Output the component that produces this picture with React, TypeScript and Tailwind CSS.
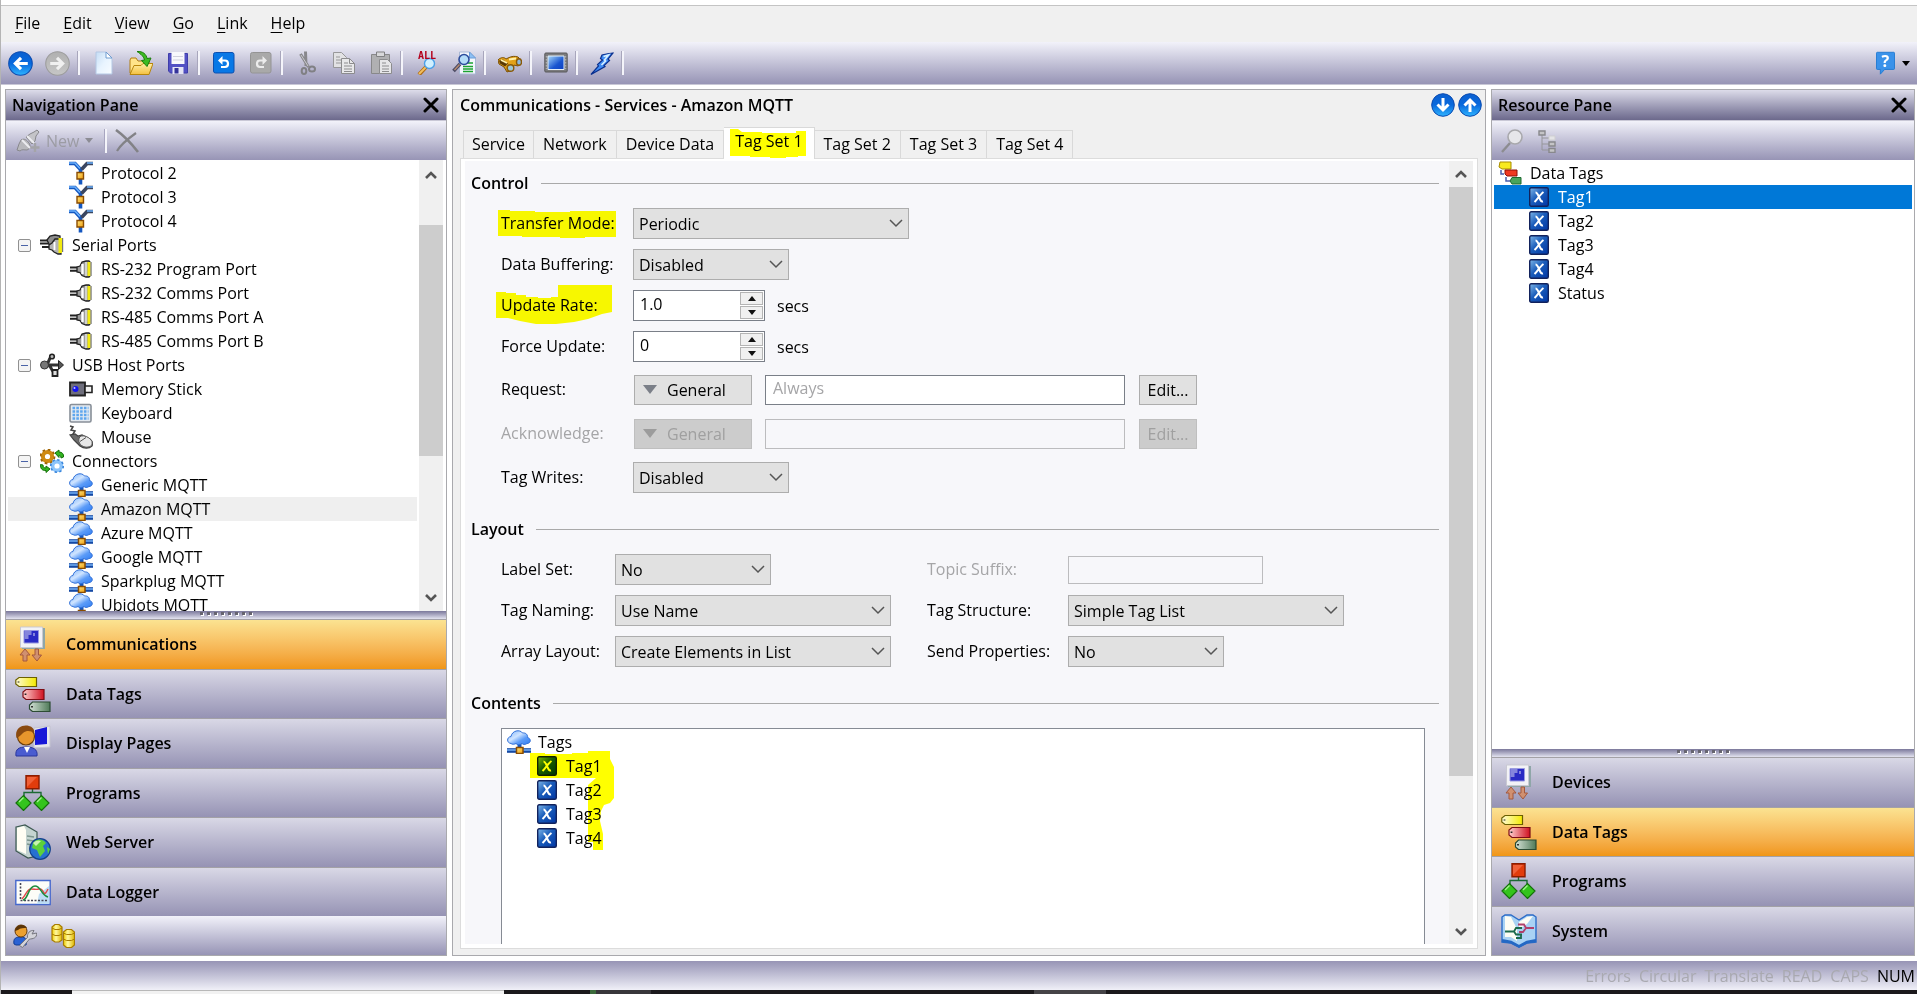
import React, { useId } from "react";

/* ---------- icons ---------- */

type IconProps = { className?: string };

const Svg = ({ box, className, children }: { box: string; className?: string; children: React.ReactNode }) => (
  <svg viewBox={box} className={className} aria-hidden="true" fill="none">
    {children}
  </svg>
);

const Defs = () => (
  <svg width="0" height="0" className="absolute" aria-hidden="true">
    <defs>
      <linearGradient id="gBall" x1="0" y1="0" x2="0" y2="1">
        <stop offset="0" stopColor="#0a5fd0" />
        <stop offset="0.5" stopColor="#0869dd" />
        <stop offset="1" stopColor="#2fb4ff" />
      </linearGradient>
      <linearGradient id="gGrey" x1="0" y1="0" x2="0" y2="1">
        <stop offset="0" stopColor="#b0b0b0" />
        <stop offset="1" stopColor="#c6c6c6" />
      </linearGradient>
      <linearGradient id="gX" x1="0" y1="0" x2="1" y2="1">
        <stop offset="0" stopColor="#7fb8ea" />
        <stop offset="0.45" stopColor="#1a5cba" />
        <stop offset="1" stopColor="#0036a4" />
      </linearGradient>
      <linearGradient id="gCloud" x1="0" y1="0" x2="1" y2="1">
        <stop offset="0" stopColor="#7db4fb" />
        <stop offset="0.4" stopColor="#cfe4ff" />
        <stop offset="0.65" stopColor="#5c9cf8" />
        <stop offset="1" stopColor="#2f7df4" />
      </linearGradient>
      <linearGradient id="gOrange" x1="0" y1="0" x2="1" y2="1">
        <stop offset="0" stopColor="#ffe27a" />
        <stop offset="1" stopColor="#f0a010" />
      </linearGradient>
      <linearGradient id="gFolder" x1="0" y1="0" x2="0" y2="1">
        <stop offset="0" stopColor="#fff0a8" />
        <stop offset="1" stopColor="#f4c040" />
      </linearGradient>
      <linearGradient id="gYel" x1="0" y1="0" x2="1" y2="0">
        <stop offset="0" stopColor="#fffbd8" />
        <stop offset="1" stopColor="#f4ea00" />
      </linearGradient>
      <linearGradient id="gRed" x1="0" y1="0" x2="1" y2="0">
        <stop offset="0" stopColor="#ffd0cf" />
        <stop offset="1" stopColor="#cf1020" />
      </linearGradient>
      <linearGradient id="gGrn" x1="0" y1="0" x2="1" y2="0">
        <stop offset="0" stopColor="#d4e2d6" />
        <stop offset="1" stopColor="#4f7a58" />
      </linearGradient>
      <linearGradient id="gPage" x1="0" y1="0" x2="1" y2="1">
        <stop offset="0" stopColor="#c4dcf4" />
        <stop offset="0.5" stopColor="#e8f4ff" />
        <stop offset="1" stopColor="#f8fcff" />
      </linearGradient>
      <linearGradient id="gScreen" x1="0" y1="0" x2="1" y2="1">
        <stop offset="0" stopColor="#a6d8fb" />
        <stop offset="0.6" stopColor="#1a56d0" />
        <stop offset="1" stopColor="#0d3fc0" />
      </linearGradient>
      <linearGradient id="gDb" x1="0" y1="0" x2="1" y2="0">
        <stop offset="0" stopColor="#f0d000" />
        <stop offset="0.4" stopColor="#fff8a0" />
        <stop offset="1" stopColor="#e0b800" />
      </linearGradient>
    </defs>
  </svg>
);

const Ball = ({ dir, off, className }: { dir: "left" | "right" | "up" | "down"; off?: boolean; className?: string }) => {
  const d = {
    left: "M19 12H7M12.500 6.500 7 12l5.500 5.500",
    right: "M5 12H17M11.500 6.500l5.500 5.500-5.500 5.500",
    up: "M12 19V7M6.500 12.500 12 7l5.500 5.500",
    down: "M12 5V17M6.500 11.500l5.500 5.500 5.500-5.500",
  }[dir];
  return (
    <Svg box="0 0 24 24" className={className}>
      <circle cx="12" cy="12" r="11.300" fill={off ? "url(#gGrey)" : "url(#gBall)"} stroke={off ? "#9c9c9c" : "#0a4ab0"} />
      <path d={d} stroke={off ? "#f0f0f0" : "#fff"} strokeWidth="3" />
    </Svg>
  );
};

const PageIcon = ({ className }: IconProps) => (
  <Svg box="0 0 24 24" className={className}>
    <path d="M4 1h10l6 6v16H4z" fill="url(#gPage)" stroke="#b4c8e4" />
    <path d="M14 1v6h6z" fill="#fff" stroke="#6f9cd0" />
  </Svg>
);
const OpenIcon = ({ className }: IconProps) => (
  <Svg box="0 0 24 24" className={className}>
    <path d="M1 9l1-2h5l2 3h11v12H1z" fill="#ffe48a" stroke="#b17d10" />
    <path d="M1 23.500 5 14.500h7l2-2h10l-4 11z" fill="url(#gFolder)" stroke="#b8860b" />
    <path d="M8 .5c6-.5 9.500 3 10 7l4-.5-4 8.500-5.500-6 3-.5C15 6 12 3 8 .5z" fill="#3dbb22" stroke="#1b7d0c" />
  </Svg>
);
const SaveIcon = ({ className }: IconProps) => (
  <Svg box="0 0 24 24" className={className}>
    <path d="M2.500 2.500h19V22h-17l-2-2z" fill="#5250c4" stroke="#3f3daa" />
    <path d="M5.500 1h13v12h-13z" fill="#f8f8fc" />
    <path d="M7 5.500h10M7 9h10" stroke="#d0d0dc" />
    <path d="M6.500 16h11v7h-11z" fill="#e4e4f4" />
    <path d="M8.500 17h4v5.500h-4z" fill="#35339a" />
  </Svg>
);
const TurnIcon = ({ off, className }: { off?: boolean; className?: string }) => (
  <Svg box="0 0 24 24" className={className}>
    <rect x="1.500" y="1.500" width="20.500" height="20.500" rx="2" fill={off ? "#a9a9a9" : "#0878e6"} stroke={off ? "#949494" : "#0c50b0"} />
    <g transform={off ? "translate(24 0) scale(-1 1)" : undefined}>
      <path d="M8 9.500h5c4 0 4 6.500 0 6.500H9" stroke={off ? "#ececec" : "#fff"} strokeWidth="2.200" />
      <path d="M10.500 5v9L6 9.500z" fill={off ? "#ececec" : "#fff"} />
    </g>
  </Svg>
);
const CutIcon = ({ className }: IconProps) => (
  <Svg box="0 0 24 24" className={className}>
    <path d="M5.500 3l8 13M10.500.5 11 15" stroke="#88888c" strokeWidth="3" />
    <path d="M6 4l7 11" stroke="#cacace" />
    <ellipse cx="9" cy="20" rx="2.300" ry="3" stroke="#808084" strokeWidth="2" />
    <ellipse cx="17" cy="18" rx="3" ry="2.500" stroke="#808084" strokeWidth="2" />
  </Svg>
);
const CopyIcon = ({ className }: IconProps) => (
  <Svg box="0 0 24 24" className={className}>
    <path d="M1.500 1.500h8l5 5v10h-13z" fill="#e2e2e4" stroke="#98989a" />
    <path d="M4 6h4M4 9h6M4 12h6" stroke="#98989a" />
    <path d="M9.500 7.500h8l5 5v10h-13z" fill="#e8e8ea" stroke="#8c8c8e" />
    <path d="M17.500 7.500v5h5" stroke="#8c8c8e" />
    <path d="M12 12h4M12 15h8M12 18h8M12 20.500h8" stroke="#8c8c8e" />
  </Svg>
);
const PasteIcon = ({ className }: IconProps) => (
  <Svg box="0 0 24 24" className={className}>
    <path d="M2.500 3.500h18v19h-18z" fill="#b0b0b2" stroke="#88888a" />
    <path d="M7.500 1h8v4.500h-8z" fill="#d8d8da" stroke="#808082" />
    <path d="M10.500 8.500h8l4 4v10h-12z" fill="#e6e6e8" stroke="#8c8c8e" />
    <path d="M13 12h4M13 15h7M13 18h7M13 20.500h7" stroke="#8c8c8e" />
  </Svg>
);
const FindAllIcon = ({ className }: IconProps) => (
  <Svg box="0 0 24 24" className={className}>
    <path d="M11 16l-7 7.500" stroke="#b06a10" strokeWidth="4" />
    <path d="M11 16l-7 7" stroke="#f0c060" strokeWidth="2" />
    <circle cx="14.500" cy="12.500" r="5" fill="#d0f0ff" stroke="#4aa0e8" strokeWidth="1.400" />
    <text x="12" y="8" textAnchor="middle" fill="#b4001c" className="font-['DejaVu_Sans_Mono',monospace] text-[10px] font-bold">
      ALL
    </text>
  </Svg>
);
const FindDocIcon = ({ className }: IconProps) => (
  <Svg box="0 0 24 24" className={className}>
    <path d="M7.500 1h10l6 6v16h-16z" fill="#f3f6fc" stroke="#a9b8d4" />
    <path d="M17.500 1v6h6z" fill="#8cc0f4" stroke="#6a9cd8" />
    <path d="M15 12h6M11 15.500h10M11 18h10M11 20.500h10" stroke="#1ca430" strokeWidth="1.700" />
    <path d="M8 13l-6.500 7" stroke="#4a4a64" strokeWidth="3.600" />
    <path d="M7.500 13.500l-5 5.500" stroke="#b88c70" strokeWidth="1.400" />
    <circle cx="12" cy="8.500" r="5" fill="#b4dcf8" stroke="#2c4c9c" strokeWidth="1.600" />
  </Svg>
);
const BinocularsIcon = ({ className }: IconProps) => (
  <Svg box="0 0 24 24" className={className}>
    <path d="M0 9c3-3 6-3 8-1l2-1c4-2 7-2 10-1l3 3v4l-3 2-4-1-2 5-5 2-3-5-5-3-1-4z" fill="#e2a21a" stroke="#7a5008" />
    <path d="M1 9.500l4-1 5 4-3 3-5-3z" fill="#5a3a04" />
    <path d="M3 9l6 3M11 8.500l7-1" stroke="#fff0a8" strokeWidth="1.800" />
    <circle cx="12.500" cy="17" r="3.300" fill="#9cc8d8" stroke="#8a5a08" strokeWidth="1.400" />
    <ellipse cx="21" cy="11" rx="2.500" ry="3.200" fill="#8cb8dc" stroke="#8a5a08" strokeWidth="1.400" />
  </Svg>
);
const ScreenIcon = ({ className }: IconProps) => (
  <Svg box="0 0 24 24" className={className}>
    <rect x=".8" y="2" width="22.400" height="19" rx="1" fill="#7c7c7e" stroke="#58585a" />
    <path d="M4 5h16v13.500H4z" fill="url(#gScreen)" stroke="#e4f0fa" />
    <path d="M2.300 5v13M21.700 5v13" stroke="#b8b8b8" strokeDasharray="1.500 1.500" />
  </Svg>
);
const BoltIcon = ({ className }: IconProps) => (
  <Svg box="0 0 24 24" className={className}>
    <path d="M12 4c4-1 7-2 11-2l-5 6 1.500 1.500-5.500 5 1 1L1 23.500l7.500-8.500-1-1.500 5-4.500-2-1.500z" fill="#3f8cf4" stroke="#0a2f8e" strokeWidth="1.200" />
    <path d="M13.500 5.500l5-1.500-4 5 1 1-4 4" stroke="#d8f0ff" strokeWidth="1.600" />
  </Svg>
);
const HelpIcon = ({ className }: IconProps) => (
  <Svg box="0 0 24 28" className={className}>
    <path d="M2.500 1.500h19a1 1 0 0 1 1 1v18a1 1 0 0 1-1 1H11L6 27v-5.500H2.500a1 1 0 0 1-1-1v-18a1 1 0 0 1 1-1z" fill="#3a92ea" stroke="#1b76d0" />
    <text x="12" y="18.500" textAnchor="middle" fill="#fff" className="font-['Open_Sans',sans-serif] text-[19px] font-bold">
      ?
    </text>
  </Svg>
);
const PlugIcon = ({ className }: IconProps) => (
  <Svg box="0 0 24 24" className={className}>
    <path d="M1 21l2-6 2-4c3-2 6 0 8 3 2 3 1 6-2 7-3 0-5-1-7 1z" fill="#b8b8bc" stroke="#88888c" />
    <path d="M10 8l4-3 4-2 3-2 2 2-3 4-1 5-3 3z" fill="#c4c4c8" stroke="#88888c" />
    <path d="M6 11l8 8M11 7l7 7" stroke="#ececf0" strokeWidth="1.800" />
    <path d="M19 14v9M14.500 18.500h9" stroke="#a4a4a8" strokeWidth="2.400" />
  </Svg>
);
const CloseIcon = ({ className }: IconProps) => (
  <Svg box="0 0 16 16" className={className}>
    <path d="M2 2l12 12M14 2 2 14" stroke="#000" strokeWidth="3" strokeLinecap="round" />
  </Svg>
);
const ThinX = ({ className }: IconProps) => (
  <Svg box="0 0 24 24" className={className}>
    <path d="M1 1c7 5 15 13 22 22" stroke="#828286" strokeWidth="2.600" />
    <path d="M21 4C14 9 6 15 2 22" stroke="#828286" strokeWidth="2.200" />
  </Svg>
);
const GlassIcon = ({ className }: IconProps) => (
  <Svg box="0 0 24 24" className={className}>
    <path d="M10 14l-8 9" stroke="#8c8c90" strokeWidth="2.400" />
    <circle cx="15" cy="8" r="7" fill="#e6e6ea" stroke="#a8a8ac" strokeWidth="1.600" />
  </Svg>
);
const HierarchyIcon = ({ className }: IconProps) => (
  <Svg box="0 0 24 24" className={className}>
    <path d="M7 6v15h8M7 9h8M7 15h8" stroke="#96969a" />
    <path d="M4 2h6v4H4zM14 13h6v4h-6zM14 19.500h6v4h-6z" fill="#c4c4c6" stroke="#88888c" strokeWidth="1.400" />
    <path d="M14 7h6v4h-6z" fill="#e4e4e6" stroke="#cfcfd1" />
  </Svg>
);

const ProtocolIcon = ({ className }: IconProps) => (
  <Svg box="0 0 24 24" className={className}>
    <path d="M0 2.500h6l5.500 6v15" stroke="#1457c0" strokeWidth="3.600" />
    <path d="M24 2.500h-6l-5.500 6" stroke="#3a4660" strokeWidth="3.600" />
    <path d="M0 2h6l5 5.500M24 2h-6" stroke="#6ab0fc" strokeWidth="1.600" />
    <path d="M8 11.500h6.500v6.500H8z" fill="url(#gOrange)" stroke="#8a4c00" strokeWidth="1.400" />
  </Svg>
);
const PortIcon = ({ className }: IconProps) => (
  <Svg box="0 0 24 24" className={className}>
    <path d="M1 10.500h8M1 13.800h8" stroke="#222" strokeWidth="2" />
    <path d="M8 10l3-1 2-4 4-1h3l1 1v14l-1 1h-3l-4-1.500-2-3L8 15z" fill="#9c9c9c" stroke="#222" strokeWidth="1.300" />
    <path d="M13.500 7v10" stroke="#fff" strokeWidth="2.400" />
    <path d="M17 5v14" stroke="#e4e4e4" strokeWidth="1.500" />
    <path d="M18.500 5h3v14h-3z" fill="#f2ea10" />
    <path d="M22.300 5v14" stroke="#a4a4a4" strokeWidth="1.400" />
  </Svg>
);
const PortsIcon = ({ className }: IconProps) => (
  <Svg box="0 0 24 24" className={className}>
    <path d="M0 7.500h8M0 10.500h9M2 14h9" stroke="#222" strokeWidth="2" />
    <path d="M7 7l3-4 5-1 5 1v9l-9 3z" fill="#8c8c8c" stroke="#222" strokeWidth="1.300" />
    <path d="M9 12l3-2 3-4h4l2 1v14h-3l-4-2-2-2-3-1z" fill="#b4b4b4" stroke="#222" strokeWidth="1.300" />
    <path d="M14.500 9v8" stroke="#fff" strokeWidth="1.800" />
    <path d="M18.500 5H22v15h-3.500z" fill="#f2ea10" />
    <path d="M22.600 5v14" stroke="#777" strokeWidth="1.200" />
  </Svg>
);
const UsbIcon = ({ className }: IconProps) => (
  <Svg box="0 0 24 24" className={className}>
    <path d="M3 12h17M5 12c5-1 3-8 7-8M8 12c4 1 3 7 7 8" stroke="#333" strokeWidth="3" />
    <path d="M18.500 7.500l5 4.500-5 4.500z" fill="#555" stroke="#222" />
    <circle cx="4.500" cy="12" r="4" fill="#777" stroke="#333" />
    <circle cx="12" cy="3.500" r="2.300" fill="#bbb" stroke="#222" strokeWidth="1.600" />
    <path d="M12.500 17h5v6h-5z" fill="#ddd" stroke="#222" strokeWidth="1.800" />
  </Svg>
);
const StickIcon = ({ className }: IconProps) => (
  <Svg box="0 0 24 24" className={className}>
    <path d="M1 5.500h15v13H1z" fill="#6e6e7c" stroke="#222" strokeWidth="1.800" />
    <path d="M16 9h7v6.500h-7z" fill="#f4f4f4" stroke="#222" strokeWidth="1.600" />
    <circle cx="6.500" cy="12" r="3" fill="#1414f0" />
    <circle cx="5.500" cy="11" r="1" fill="#c8c8ff" />
  </Svg>
);
const KeyboardIcon = ({ className }: IconProps) => (
  <Svg box="0 0 24 24" className={className}>
    <rect x="1" y="3.500" width="21" height="17.500" rx="1.500" fill="#e4eaf0" stroke="#888f98" strokeWidth="1.600" />
    <path d="M3.500 7h16M3.500 10.500h16M3.500 14h16M3.500 17.500h16" stroke="#5ea6ee" strokeWidth="2.400" strokeDasharray="2.600 1.200" />
  </Svg>
);
const MouseIcon = ({ className }: IconProps) => (
  <Svg box="0 0 24 24" className={className}>
    <path d="M1 1l3 1-2 3 4 1-2 3 3 2" stroke="#444" strokeWidth="1.500" />
    <path d="M1 10l4 5 6 6c4 3 9 3 12 0 1-2 0-5-2-7l-8-4-4 1-3-2z" fill="#6c6c6c" stroke="#444" strokeWidth="1.200" />
    <path d="M11 11.500c4-2 10 1 12 5 1 5-3 6-7 5.500-5-1-8-6-5-10.500z" fill="#e8e8e8" stroke="#555" />
    <path d="M17 12.500l-6 4" stroke="#555" />
  </Svg>
);
const GearsIcon = ({ className }: IconProps) => (
  <Svg box="0 0 24 24" className={className}>
    <circle cx="7.500" cy="7.500" r="4.600" stroke="#cf8a10" strokeWidth="4" />
    <circle cx="7.500" cy="7.500" r="7" stroke="#a06404" strokeWidth="1.800" strokeDasharray="2.700 2.800" />
    <circle cx="17" cy="17" r="4.400" stroke="#8cc4fa" strokeWidth="3.600" />
    <circle cx="17" cy="17" r="6.300" stroke="#3a86dc" strokeWidth="1.600" strokeDasharray="2.400 2.450" />
    <path d="M15 4l4-3v2c3 0 5 2 4.500 5l-2.500 1c0-2-1-2.500-2-2.500V8.500zM10 20l-4-3v2c-2 0-3-1-3-3l-2.500-.5c0 4 1 6 5.500 6v2z" fill="#32b420" stroke="#14700a" />
  </Svg>
);
const CloudIcon = ({ className }: IconProps) => (
  <Svg box="0 0 24 24" className={className}>
    <path d="M12.500 13v8" stroke="#1457c0" strokeWidth="4" />
    <path d="M0 20.500h24" stroke="#1549a4" strokeWidth="4.600" />
    <path d="M0 20h24" stroke="#7cb8fc" strokeWidth="1.400" />
    <path d="M9.500 17.500h6.500v6H9.500z" fill="url(#gOrange)" stroke="#8a4c00" strokeWidth="1.500" />
    <path d="M4 13.500c-4.500-.5-4.500-6.500 0-7C5 .5 13-1 15.500 3c3.500-.5 5.500 2 5 4.500 4 1 3.500 6-.5 6-2 1.500-4 1-5 0-2 1.500-5 1.500-6 0-1.500 1-4 1-5 0z" fill="url(#gCloud)" stroke="#2f6fd8" />
  </Svg>
);
const TagX = ({ className }: IconProps) => (
  <Svg box="0 0 20 20" className={className}>
    <rect x=".7" y=".7" width="18.600" height="18.600" rx="1.500" fill="url(#gX)" stroke="#12225c" strokeWidth="1.400" />
    <path d="M6.500 5.500c1.500 0 2 1 3.500 4.500s2 5 4 4.500M14.500 5c-3 2-6 7-9 10" stroke="#fff" strokeWidth="2" />
  </Svg>
);
const SmallTagsIcon = ({ className }: IconProps) => (
  <Svg box="0 0 24 24" className={className}>
    <path d="M2 1h11v7H4L1 6z" fill="#f8ea20" stroke="#a88c00" />
    <path d="M7 9h12v6H9l-2-2z" fill="#f03820" stroke="#8c1008" />
    <path d="M14 16.500h9v6.500h-9l-2-3z" fill="#4aa45c" stroke="#1c6a30" />
    <path d="M3 9v4h3M8 16v4h4" stroke="#4a5fae" strokeWidth="1.500" />
  </Svg>
);

const CommIcon = ({ className }: IconProps) => (
  <Svg box="0 0 36 36" className={className}>
    <path d="M7 2h23v21H7z" fill="#8fa6a8" />
    <path d="M5.500 1h22v20.500h-22z" fill="#f2f2f6" stroke="#c9c9d2" />
    <path d="M9 4.500h14.500v12.500H9z" fill="#2a2ac4" stroke="#9a9ae0" />
    <path d="M9.500 5h7v4h-3v4h-4zM18 7h2v3h-2z" fill="#8484dc" />
    <path d="M5 29 10 23l5 6h-3v6H8v-6zM17 29h3v-6h3.500v6h3L22 35z" fill="#d09070" stroke="#a4583c" />
  </Svg>
);
const TagsIcon = ({ className }: IconProps) => (
  <Svg box="0 0 36 36" className={className}>
    <path d="M4 1.500h17.500v9H4L.8 8V4z" fill="url(#gYel)" stroke="#6b6000" strokeWidth="1.200" />
    <path d="M11 13.500h18v10H11L8 21v-5z" fill="url(#gRed)" stroke="#7c0c14" strokeWidth="1.200" />
    <path d="M17.500 26H35v9.500H17.500L14.500 33v-4z" fill="url(#gGrn)" stroke="#2c4c34" strokeWidth="1.200" />
    <path d="M3.500 5.500v1M10.500 17.500v1.500M17 30v1.500" stroke="#222" strokeWidth="1.800" />
  </Svg>
);
const DisplayIcon = ({ className }: IconProps) => (
  <Svg box="0 0 36 36" className={className}>
    <path d="M19 3l16-2v21l-16 1z" fill="#e6e6ec" stroke="#c4c4d0" />
    <path d="M20 5l12-3v17l-12 1z" fill="#1616d8" />
    <path d="M1 31c-1-7 3-9 10-9s12 2 11 9H1z" fill="#4a5cd0" stroke="#28349c" />
    <path d="M9 22l3 6 3-6z" fill="#fff" />
    <circle cx="11" cy="11.500" r="8.500" fill="#e8962c" stroke="#6a3c08" strokeWidth="1.200" />
    <path d="M1.500 13C-1 3 8-1 14 1c4 1 6 4 5 7-3-2-7-3-11 0-2 2-4 4-6.500 5z" fill="#8a4a10" />
  </Svg>
);
const ProgramsIcon = ({ className }: IconProps) => (
  <Svg box="0 0 36 36" className={className}>
    <path d="M17.500 13v4M9 22v-4.500h17V22" stroke="#1c6a34" strokeWidth="1.400" />
    <path d="M11 .8h13v13H11z" fill="#e23c0c" stroke="#8c1c00" strokeWidth="1.400" />
    <path d="M12 12V2h10z" fill="#f06038" />
    <path d="M1 28l7.500-7.500L16 28l-7.500 7.500zM19 28l7.500-7.500L34 28l-7.500 7.500z" fill="#34c41c" stroke="#14700a" strokeWidth="1.200" />
    <path d="M4 27l4.500-4.500M22 27l4.500-4.500" stroke="#a4f090" strokeWidth="1.400" />
  </Svg>
);
const ServerIcon = ({ className }: IconProps) => (
  <Svg box="0 0 36 36" className={className}>
    <path d="M1 3l9-2 12 7v24l-9 2L1 27z" fill="#c4d4d0" stroke="#3c5850" strokeWidth="1.200" />
    <path d="M2 4l7-2 2 4v24l-9-4z" fill="#fffef4" />
    <path d="M12 12l7 1M12 16l7 1M12 20l5 1" stroke="#7c968e" strokeWidth="1.500" />
    <circle cx="25" cy="25" r="10.300" fill="#2670d0" stroke="#12408c" strokeWidth="1.200" />
    <path d="M18 19c4-5 10-4 13 0l-3 3 2 5-5 6-3-7-5-2zM32 23l3 2-2 5z" fill="#5cd03c" />
    <path d="M18 19c3-3 6-3 8-2l-5 5z" fill="#c8f4b0" />
  </Svg>
);
const LoggerIcon = ({ className }: IconProps) => (
  <Svg box="0 0 36 36" className={className}>
    <path d="M.8 6.500h34.400v24H.8z" fill="#fdfdf8" stroke="#4668cc" strokeWidth="1.400" />
    <path d="M24 20l10-8v18H22z" fill="#bcdcf4" />
    <path d="M5.500 9v17.500h28" stroke="#445" strokeDasharray="2 1.500" strokeWidth="1.600" />
    <path d="M7 25c4-4 5-10 9-10s5 1 8 0 4 2 5 4 3-2 4-4" stroke="#e04848" strokeWidth="1.400" />
    <path d="M8 26c5 0 5-14 12-14 6 0 6 9 13 11" stroke="#1c8c3c" strokeWidth="1.600" />
  </Svg>
);
const SystemIcon = ({ className }: IconProps) => (
  <Svg box="0 0 36 36" className={className}>
    <path d="M1 4l3-2 6 0 8 5 8-5 6 0 3 2v25l-9 1-8 4-8-4-9-1z" fill="#a9d2f4" stroke="#2c6cc8" strokeWidth="1.400" />
    <path d="M4 3l6 1 6 12v12l-6-4H4z" fill="#fdfcf4" />
    <path d="M32 3l-6 1-8 5v7l8-5z" fill="#fdfcf4" />
    <path d="M4 18.500h10M21 15h-6l-2 3.500 2 3h6M20 21.500v3.500h-5" stroke="#1c6a4c" strokeWidth="1.800" />
    <path d="M33 15h-8l-2-3.500h-6M25 15l-3 4h-4" stroke="#b0406c" strokeWidth="1.800" />
    <path d="M1 27.500l9 1.500 8 4.500 8-4.500 9-1.500" stroke="#2468c4" strokeWidth="2.800" />
  </Svg>
);
const UserToolIcon = ({ className }: IconProps) => (
  <Svg box="0 0 24 24" className={className}>
    <path d="M1 20c-1-6 2-7 7-7s6 3 5 8H3z" fill="#2a62d4" stroke="#123c94" />
    <circle cx="8" cy="7" r="6" fill="#eca030" stroke="#6a3c08" />
    <path d="M2 7C2 0 12-1 14 4c-3 0-7 0-9 2z" fill="#5a3408" />
    <path d="M23.500 9c1 5-4 6-7 6l-7 8.500-3-2 8-8C14 9 17 6 21 6.500L19 10z" fill="#d4d4da" stroke="#77777f" />
  </Svg>
);
const DbIcon = ({ className }: IconProps) => (
  <Svg box="0 0 24 24" className={className}>
    <path d="M1 3l3-2.500h4L11 3v13l-3 2H4l-3-2z" fill="url(#gDb)" stroke="#a87c00" strokeWidth="1.200" />
    <path d="M1 10l3 1.500h4L11 10M1 4l3 1.500h4L11 4" stroke="#a87c00" />
    <path d="M12.500 8l3-2.500h5l3 2.500v13l-3 2.500h-5l-3-2.500z" fill="url(#gDb)" stroke="#a87c00" strokeWidth="1.200" />
    <path d="M12.500 15l3 1.500h5l3-1.500M12.500 9l3 1.500h5l3-1.500" stroke="#a87c00" />
  </Svg>
);

/* ---------- shared pieces ---------- */

const barGradient = "bg-linear-to-b from-[#f2f2fa] to-[#9794b5]";

const Separator = () => <span className="ml-[2px] mr-[5px] h-6 w-[2px] bg-[#f4f4fa] shadow-[-1px_0_0_#a8a6bc]" />;

const ToolButton = ({ label, disabled, children }: { label: string; disabled?: boolean; children: React.ReactNode }) => (
  <button type="button" aria-label={label} disabled={disabled} className="flex h-9 w-[37px] items-center justify-center">
    {children}
  </button>
);

const PaneHeader = ({ title }: { title: string }) => (
  <header className="flex h-[30px] items-center justify-between bg-linear-to-b from-[#dddcea] to-[#6c698c] pl-[6px] pr-[7px]">
    <h2 className="font-semibold">{title}</h2>
    <button type="button" aria-label={`Close ${title}`}>
      <CloseIcon className="size-4" />
    </button>
  </header>
);

const Chevron = ({ up, className = "" }: { up?: boolean; className?: string }) => (
  <svg viewBox="0 0 12 10" className={`h-2.5 w-3 ${className}`} fill="none" aria-hidden="true">
    <path d={up ? "M1 8 6 3l5 5" : "M1 2l5 5 5-5"} stroke="#555" strokeWidth="2.600" />
  </svg>
);

const Splitter = () => (
  <div className="flex h-2 shrink-0 justify-center gap-[4px] bg-linear-to-b from-[#7b789b] to-[#e4e4f0] pt-px">
    {Array.from({ length: 8 }, (_, i) => (
      <span key={i} className="size-[3px] bg-[#66646f] shadow-[1px_1px_0_#fff]" />
    ))}
  </div>
);

type NavItem = { label: string; icon: React.FC<IconProps>; active?: boolean };

const NavList = ({ items, className }: { items: NavItem[]; className: string }) => (
  <nav className={`grid shrink-0 auto-rows-fr ${className}`}>
    {items.map(({ label, icon: Icon, active }) => (
      <button
        key={label}
        type="button"
        aria-current={active ? "page" : undefined}
        className={`flex items-center gap-[15px] border-t border-[#a3a1a6] bg-linear-to-b pl-[9px] text-left font-semibold ${
          active ? "from-[#fbe391] to-[#f09614]" : "from-[#d9d8e6] to-[#9693b4]"
        }`}
      >
        <Icon className="size-9" />
        {label}
      </button>
    ))}
  </nav>
);

/* ---------- navigation tree ---------- */

type Leaf = { label: string; icon: React.FC<IconProps>; selected?: boolean };
type Branch = { label?: string; icon?: React.FC<IconProps>; items: Leaf[] };

const navTree: Branch[] = [
  {
    items: [
      { label: "Protocol 2", icon: ProtocolIcon },
      { label: "Protocol 3", icon: ProtocolIcon },
      { label: "Protocol 4", icon: ProtocolIcon },
    ],
  },
  {
    label: "Serial Ports",
    icon: PortsIcon,
    items: [
      { label: "RS-232 Program Port", icon: PortIcon },
      { label: "RS-232 Comms Port", icon: PortIcon },
      { label: "RS-485 Comms Port A", icon: PortIcon },
      { label: "RS-485 Comms Port B", icon: PortIcon },
    ],
  },
  {
    label: "USB Host Ports",
    icon: UsbIcon,
    items: [
      { label: "Memory Stick", icon: StickIcon },
      { label: "Keyboard", icon: KeyboardIcon },
      { label: "Mouse", icon: MouseIcon },
    ],
  },
  {
    label: "Connectors",
    icon: GearsIcon,
    items: [
      { label: "Generic MQTT", icon: CloudIcon },
      { label: "Amazon MQTT", icon: CloudIcon, selected: true },
      { label: "Azure MQTT", icon: CloudIcon },
      { label: "Google MQTT", icon: CloudIcon },
      { label: "Sparkplug MQTT", icon: CloudIcon },
      { label: "Ubidots MQTT", icon: CloudIcon },
    ],
  },
];

const NavigationPane = () => (
  <section className="flex w-[442px] shrink-0 flex-col border border-[#a9a9ad] bg-white">
    <PaneHeader title="Navigation Pane" />
    <div className={`flex h-10 shrink-0 items-center border-t border-[#c9c8d6] pl-[10px] text-[#9c9ca4] ${barGradient}`}>
      <button type="button" disabled className="flex items-center gap-1.5">
        <PlugIcon className="size-6" />
        New
        <svg viewBox="0 0 8 5" className="w-2" aria-hidden="true">
          <path d="M0 0h8L4 5z" fill="#8c8c94" />
        </svg>
      </button>
      <span className="ml-3 mr-2 h-6 w-[2px] bg-[#f4f4fa] shadow-[-1px_0_0_#a8a6c0]" />
      <button type="button" aria-label="Delete" disabled>
        <ThinX className="size-6" />
      </button>
    </div>
    <div className="flex min-h-0 flex-1 pr-[3px]">
      <ul role="tree" className="min-w-0 flex-1 overflow-hidden pl-[2px] pr-[2px] pt-px">
        {navTree.map((branch, i) => (
          <li key={branch.label ?? i} role="none">
            {branch.icon && (
              <div role="treeitem" aria-expanded="true" className="flex h-6 items-center pl-[10px]">
                <span className="mr-[9px] flex size-[13px] items-center justify-center rounded-[2px] border border-[#919191] bg-[#f4f4f4]">
                  <span className="h-px w-[7px] bg-[#4a63a7]" />
                </span>
                <branch.icon className="mr-2 size-6" />
                {branch.label}
              </div>
            )}
            <ul role="group">
              {branch.items.map(({ label, icon: Icon, selected }) => (
                <li
                  key={label}
                  role="treeitem"
                  aria-selected={!!selected}
                  className={`flex h-6 items-center gap-2 pl-[61px] ${selected ? "bg-[#efefef]" : ""}`}
                >
                  <Icon className="size-6 shrink-0" />
                  {label}
                </li>
              ))}
            </ul>
          </li>
        ))}
      </ul>
      <div className="flex w-6 flex-col items-center bg-[#f0f0f0] pb-2 pt-2.5">
        <Chevron up />
        <div className="mt-[45px] h-[231px] w-full bg-[#cdcdcd]" />
        <Chevron className="mt-auto" />
      </div>
    </div>
    <Splitter />
    <NavList
      className="h-[297px]"
      items={[
        { label: "Communications", icon: CommIcon, active: true },
        { label: "Data Tags", icon: TagsIcon },
        { label: "Display Pages", icon: DisplayIcon },
        { label: "Programs", icon: ProgramsIcon },
        { label: "Web Server", icon: ServerIcon },
        { label: "Data Logger", icon: LoggerIcon },
      ]}
    />
    <div className={`flex h-[39px] shrink-0 items-center gap-[14px] pl-[7px] ${barGradient}`}>
      <button type="button" aria-label="Security">
        <UserToolIcon className="size-6" />
      </button>
      <button type="button" aria-label="Data">
        <DbIcon className="size-6" />
      </button>
    </div>
  </section>
);

/* ---------- form controls ---------- */

const Heading = ({ children }: { children: string }) => (
  <div className="flex h-6 items-center gap-3">
    <h3 className="font-semibold">{children}</h3>
    <span className="h-px flex-1 bg-[#a9a9a9]" />
  </div>
);

const Row = ({
  label,
  labelWidth,
  disabled,
  mark,
  children,
}: {
  label: string;
  labelWidth: string;
  disabled?: boolean;
  mark?: React.ReactNode;
  children: (id: string) => React.ReactNode;
}) => {
  const id = useId();
  return (
    <div className="flex h-[31px] items-center">
      <div className={`relative shrink-0 whitespace-nowrap pb-px ${labelWidth}`}>
        <label htmlFor={id} className={disabled ? "text-[#a5a5a7]" : ""}>
          {label}
        </label>
        {mark}
      </div>
      {children(id)}
    </div>
  );
};

const Select = ({ id, value, width }: { id: string; value: string; width: string }) => (
  <div className={`relative h-[31px] ${width}`}>
    <select id={id} className="size-full appearance-none border border-[#adadad] bg-[#e1e1e1] pl-[5px] pr-6">
      <option>{value}</option>
    </select>
    <svg viewBox="0 0 14 9" className="pointer-events-none absolute right-[6px] top-[11px] h-[9px] w-3.5" fill="none" aria-hidden="true">
      <path d="M1 1l6 6 6-6" stroke="#555" strokeWidth="1.500" />
    </svg>
  </div>
);

const Spinner = ({ id, value }: { id: string; value: string }) => (
  <>
    <div className="flex h-[31px] w-[132px] border border-[#7a7f88] bg-white p-px">
      <input id={id} defaultValue={value} className="min-w-0 flex-1 pb-1 pl-[5px] outline-none" />
      <div className="grid w-[23px] grid-rows-2 gap-px">
        {["M0 5h8L4 0z", "M0 0h8L4 5z"].map((d, i) => (
          <button key={d} type="button" aria-label={i ? "Decrease" : "Increase"} className="flex items-center justify-center border border-[#b4b4b4] bg-[#f0f0f0]">
            <svg viewBox="0 0 8 5" className="w-2" aria-hidden="true">
              <path d={d} fill="#111" />
            </svg>
          </button>
        ))}
      </div>
    </div>
    <span className="ml-3">secs</span>
  </>
);

const Expression = ({ id, value, disabled }: { id: string; value?: string; disabled?: boolean }) => {
  const btn = disabled ? "border-[#bfbfbf] bg-[#cccccc] text-[#a0a0a0]" : "border-[#adadad] bg-[#e1e1e1]";
  return (
    <div className="flex h-[30px] min-w-0">
      <button type="button" disabled={disabled} className={`ml-px flex w-[118px] items-center gap-2.5 border pl-2 ${btn}`}>
        <svg viewBox="0 0 14 9" className="w-3.5" aria-hidden="true">
          <path d="M0 0h14L7 9z" fill={disabled ? "#9c9c9c" : "#7b7f88"} />
        </svg>
        General
      </button>
      <input
        id={id}
        placeholder={value}
        disabled={disabled}
        className={`ml-[13px] w-[360px] min-w-0 border pb-1 pl-[7px] outline-none placeholder:text-[#a5a5a7] ${
          disabled ? "border-[#bcbcbe] bg-transparent" : "border-[#7a7f88] bg-white"
        }`}
      />
      <button type="button" disabled={disabled} className={`ml-[14px] w-[58px] border ${btn}`}>
        Edit...
      </button>
    </div>
  );
};

/* Felt-pen strokes laid over the text they emphasise. */
const Mark = ({ box, d, className }: { box: string; d: string; className: string }) => (
  <svg viewBox={box} className={`pointer-events-none absolute mix-blend-multiply ${className}`} aria-hidden="true">
    <path d={d} fill="#ffff00" />
  </svg>
);

const tabs = ["Service", "Network", "Device Data", "Tag Set 1", "Tag Set 2", "Tag Set 3", "Tag Set 4"];

const EditorPane = () => (
  <main className="flex min-w-0 flex-1 flex-col border border-[#a9a9ad] bg-[#f0f0f0] pb-[6px] pl-[7px] pr-[7px]">
    <header className="flex h-[30px] items-center justify-between">
      <h1 className="font-semibold">Communications - Services - Amazon MQTT</h1>
      <div className="-mr-1 flex gap-[3px]">
        <button type="button" aria-label="Next">
          <Ball dir="down" className="size-6" />
        </button>
        <button type="button" aria-label="Previous">
          <Ball dir="up" className="size-6" />
        </button>
      </div>
    </header>
    <div role="tablist" className="relative z-10 -mb-px mt-[7px] flex items-end pl-[3px]">
      {tabs.map((tab) => {
        const active = tab === "Tag Set 1";
        return (
          <button
            key={tab}
            type="button"
            role="tab"
            aria-selected={active}
            className={
              active
                ? "relative h-[32px] border border-b-0 border-l-0 border-[#d9d9d9] bg-white px-[11px] pb-1.5"
                : "mb-px h-[28px] border border-b-0 border-l-0 border-[#d9d9d9] px-[9px] pb-px first:border-l first:px-2"
            }
          >
            {tab}
            {active && <Mark box="0 0 77 31" d="M0 1h8l4 3h20v1h34V3h10v25h-8v1H56v1H40v-1H20v-1H0z" className="left-1.5 top-0 h-[31px] w-[77px]" />}
          </button>
        );
      })}
    </div>
    <div className="flex min-h-0 flex-1 border border-[#dcdcdc] bg-white pb-1 pl-1 pr-1 pt-[2px]">
      <form className="flex min-w-0 flex-1 flex-col overflow-hidden bg-[#f7f7fa] pl-[6px] pr-[10px] pt-[10px]">
        <Heading>Control</Heading>
        <div className="mt-[13px] flex flex-col gap-2.5 pl-[30px]">
          <Row
            label="Transfer Mode:"
            labelWidth="w-[132px]"
            mark={<Mark box="0 0 118 28" d="M0 0h12v1h25v1h35V1h46v26H87v1H62v-1H24v-1H0z" className="-left-[3px] -top-[1px] h-7 w-[118px]" />}
          >
            {(id) => <Select id={id} value="Periodic" width="w-[276px]" />}
          </Row>
          <Row label="Data Buffering:" labelWidth="w-[132px]">
            {(id) => <Select id={id} value="Disabled" width="w-[156px]" />}
          </Row>
          <Row
            label="Update Rate:"
            labelWidth="w-[132px]"
            mark={
              <Mark
                box="0 0 116 39"
                d="M0 7h10v1h10v2h10v2h12v1h13v-1h7V0h54v27l-10 2-14 5-14 3-18 2H40l-16-3-12-3H0z"
                className="-left-[5px] -top-[8px] h-[39px] w-[116px]"
              />
            }
          >
            {(id) => <Spinner id={id} value="1.0" />}
          </Row>
          <Row label="Force Update:" labelWidth="w-[132px]">
            {(id) => <Spinner id={id} value="0" />}
          </Row>
        </div>
        <div className="mt-3 flex flex-col gap-[13px] pl-[30px]">
          <Row label="Request:" labelWidth="w-[132px]">
            {(id) => <Expression id={id} value="Always" />}
          </Row>
          <Row label="Acknowledge:" labelWidth="w-[132px]" disabled>
            {(id) => <Expression id={id} disabled />}
          </Row>
          <Row label="Tag Writes:" labelWidth="w-[132px]">
            {(id) => <Select id={id} value="Disabled" width="w-[156px]" />}
          </Row>
        </div>

        <div className="mt-6">
          <Heading>Layout</Heading>
        </div>
        <div className="mt-[13px] grid grid-cols-[426px_1fr] gap-y-2.5 pl-[30px]">
          <Row label="Label Set:" labelWidth="w-[114px]">
            {(id) => <Select id={id} value="No" width="w-[156px]" />}
          </Row>
          <Row label="Topic Suffix:" labelWidth="w-[141px]" disabled>
            {(id) => <input id={id} disabled className="h-7 w-[195px] border border-[#bcbcbe] bg-transparent" />}
          </Row>
          <Row label="Tag Naming:" labelWidth="w-[114px]">
            {(id) => <Select id={id} value="Use Name" width="w-[276px]" />}
          </Row>
          <Row label="Tag Structure:" labelWidth="w-[141px]">
            {(id) => <Select id={id} value="Simple Tag List" width="w-[276px]" />}
          </Row>
          <Row label="Array Layout:" labelWidth="w-[114px]">
            {(id) => <Select id={id} value="Create Elements in List" width="w-[276px]" />}
          </Row>
          <Row label="Send Properties:" labelWidth="w-[141px]">
            {(id) => <Select id={id} value="No" width="w-[156px]" />}
          </Row>
        </div>

        <div className="mt-6">
          <Heading>Contents</Heading>
        </div>
        <div className="relative ml-[30px] mr-[14px] mt-[13px] flex-1 border border-b-0 border-[#868b94] bg-white pl-[5px] pt-px">
          <div className="flex h-6 items-center gap-[7px]">
            <CloudIcon className="size-6" />
            Tags
          </div>
          <ul>
            {["Tag1", "Tag2", "Tag3", "Tag4"].map((t) => (
              <li key={t} className="flex h-6 items-center gap-[9px] pl-[30px]">
                <TagX className="size-5" />
                {t}
              </li>
            ))}
          </ul>
          <Mark
            box="0 0 84 101"
            d="M0 2h15v1h27V2h16V0h22v8l4 8v31l-4 5-6 2-3 6-1 10 3 13v16H63V91h-5V34l8-7H0z"
            className="left-[28px] top-[22px] h-[101px] w-[84px]"
          />
        </div>
      </form>
      <div className="flex w-6 flex-col items-center bg-[#f0f0f0] pb-[7px] pt-2">
        <Chevron up />
        <div className="mt-2 h-[589px] w-full bg-[#cdcdcd]" />
        <Chevron className="mt-auto" />
      </div>
    </div>
  </main>
);

/* ---------- resource pane ---------- */

const ResourcePane = () => (
  <section className="flex w-[424px] shrink-0 flex-col border border-[#a9a9ad] bg-white">
    <PaneHeader title="Resource Pane" />
    <div className={`flex h-10 shrink-0 items-center gap-[11px] border-t border-[#c9c8d6] pl-2 ${barGradient}`}>
      <button type="button" aria-label="Find" disabled>
        <GlassIcon className="size-6" />
      </button>
      <button type="button" aria-label="Show tree" disabled>
        <HierarchyIcon className="size-6" />
      </button>
    </div>
    <div className="min-h-0 flex-1 overflow-hidden px-[2px] pt-px">
      <div className="flex h-6 items-center gap-2 pl-1">
        <SmallTagsIcon className="size-6" />
        Data Tags
      </div>
      <ul>
        {["Tag1", "Tag2", "Tag3", "Tag4", "Status"].map((t) => (
          <li key={t} className={`flex h-6 items-center gap-[9px] pl-[35px] ${t === "Tag1" ? "bg-[#0078d7] text-white" : ""}`}>
            <TagX className="size-5" />
            {t}
          </li>
        ))}
      </ul>
    </div>
    <Splitter />
    <NavList
      className="h-[198px]"
      items={[
        { label: "Devices", icon: CommIcon },
        { label: "Data Tags", icon: TagsIcon, active: true },
        { label: "Programs", icon: ProgramsIcon },
        { label: "System", icon: SystemIcon },
      ]}
    />
  </section>
);

/* ---------- window ---------- */

export default function App() {
  return (
    <div className="flex h-screen flex-col overflow-hidden border-l border-[#b4b4b4] bg-white pt-[5px] font-['Open_Sans',sans-serif] text-base leading-6 text-black">
      <Defs />
      <nav className="flex h-[37px] shrink-0 items-center gap-[23px] border-t border-[#c4c4c4] bg-[#f0f0f0] pb-0.5 pl-[14px]">
        {["File", "Edit", "View", "Go", "Link", "Help"].map((m) => (
          <button key={m} type="button">
            <span className="underline underline-offset-[3px]">{m[0]}</span>
            {m.slice(1)}
          </button>
        ))}
      </nav>
      <div className={`flex h-[43px] shrink-0 items-center border-b border-[#c9c8d6] pl-px pr-[7px] ${barGradient}`}>
        <ToolButton label="Back"><Ball dir="left" className="size-[25px]" /></ToolButton>
        <ToolButton label="Forward" disabled><Ball dir="right" off className="size-[25px]" /></ToolButton>
        <Separator />
        <ToolButton label="New"><PageIcon className="size-6" /></ToolButton>
        <ToolButton label="Open"><OpenIcon className="size-6" /></ToolButton>
        <ToolButton label="Save"><SaveIcon className="size-6" /></ToolButton>
        <Separator />
        <ToolButton label="Undo"><TurnIcon className="size-6" /></ToolButton>
        <ToolButton label="Redo" disabled><TurnIcon off className="size-6" /></ToolButton>
        <Separator />
        <ToolButton label="Cut" disabled><CutIcon className="size-6" /></ToolButton>
        <ToolButton label="Copy" disabled><CopyIcon className="size-6" /></ToolButton>
        <ToolButton label="Paste" disabled><PasteIcon className="size-6" /></ToolButton>
        <Separator />
        <ToolButton label="Find all"><FindAllIcon className="size-6" /></ToolButton>
        <ToolButton label="Find in document"><FindDocIcon className="size-6" /></ToolButton>
        <Separator />
        <ToolButton label="Search"><BinocularsIcon className="size-6" /></ToolButton>
        <Separator />
        <ToolButton label="Emulator"><ScreenIcon className="size-6" /></ToolButton>
        <Separator />
        <ToolButton label="Download"><BoltIcon className="size-6" /></ToolButton>
        <Separator />
        <button type="button" aria-label="Help topics" className="ml-auto flex items-center gap-[6px]">
          <HelpIcon className="h-6 w-[21px]" />
          <svg viewBox="0 0 8 5" className="w-2" aria-hidden="true">
            <path d="M0 0h8L4 5z" fill="#000" />
          </svg>
        </button>
      </div>

      <div className="flex min-h-0 flex-1 gap-[5px] pb-[5px] pl-[4px] pr-[2px] pt-[4px]">
        <NavigationPane />
        <EditorPane />
        <ResourcePane />
      </div>

      <footer className="flex h-[29px] shrink-0 items-center justify-end gap-2 bg-linear-to-b from-[#9794b5] to-[#f0f0f8] pr-[2px] text-[#a9a9b0]">
        <span>Errors</span>
        <span>Circular</span>
        <span>Translate</span>
        <span>READ</span>
        <span>CAPS</span>
        <span className="text-black">NUM</span>
      </footer>
      <div className="flex h-1 shrink-0 bg-[#1b191c]">
        <span className="ml-[71px] w-[432px] border-t border-[#b8b8b8] bg-[#f2f2f2]" />
        <span className="ml-[86px] w-1.5 bg-[#3c6b3c]" />
        <span className="w-[55px] bg-[#38363a]" />
        <span className="ml-[383px] w-[72px] bg-[#454347]" />
      </div>
    </div>
  );
}
